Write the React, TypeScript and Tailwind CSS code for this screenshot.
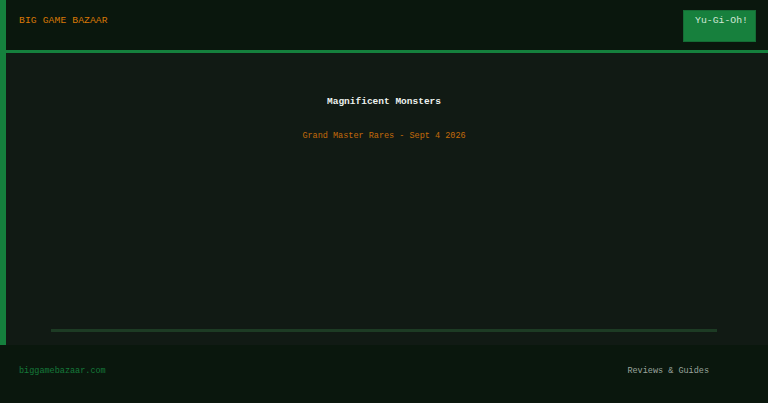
import React from "react";

export default function App() {
  return (
    <div
      className="w-[768px] h-[403px] flex flex-col bg-[#0a170d] overflow-hidden"
      style={{ fontFamily: '"Liberation Mono", "DejaVu Sans Mono", monospace' }}
    >
      <div className="flex flex-col border-l-[6px] border-[#15803d] h-[345px]">
        <header className="h-[53px] shrink-0 flex items-start justify-between bg-[#0a170d] border-b-[3px] border-[#15803d] pl-[13px] pr-[12px]">
          <div className="mt-[15px] text-[9.7px] leading-[12px] text-[#d97706] tracking-[0.1px]">
            BIG GAME BAZAAR
          </div>
          <button className="mt-[10px] w-[73px] h-[32px] bg-[#17803d] border border-[#146c34] text-[#d1e7d6] text-[9.8px] leading-[12px] flex justify-center pt-[4px] pl-[4px]">
            Yu-Gi-Oh!
          </button>
        </header>
        <main className="flex-1 flex flex-col bg-[#111a14] pr-[6px]">
          <div className="mt-[43px] text-center text-[9.5px] leading-[12px] font-bold text-[#eef2ef]">
            Magnificent Monsters
          </div>
          <div className="mt-[22px] text-center text-[8.5px] leading-[12px] text-[#c46a0a]">
            Grand Master Rares - Sept 4 2026
          </div>
          <div className="flex-1" />
          <div className="mx-[45px] h-[3px] bg-[#1d3b24] mb-[13px]" />
        </main>
      </div>
      <footer className="flex-1 flex items-start justify-between bg-[#0a170d] pl-[19px] pr-[59px] pt-[20px]">
        <div className="text-[8.5px] leading-[12px] text-[#157a3a]">biggamebazaar.com</div>
        <div className="text-[8.5px] leading-[12px] text-[#9aa59d]">Reviews &amp; Guides</div>
      </footer>
    </div>
  );
}
